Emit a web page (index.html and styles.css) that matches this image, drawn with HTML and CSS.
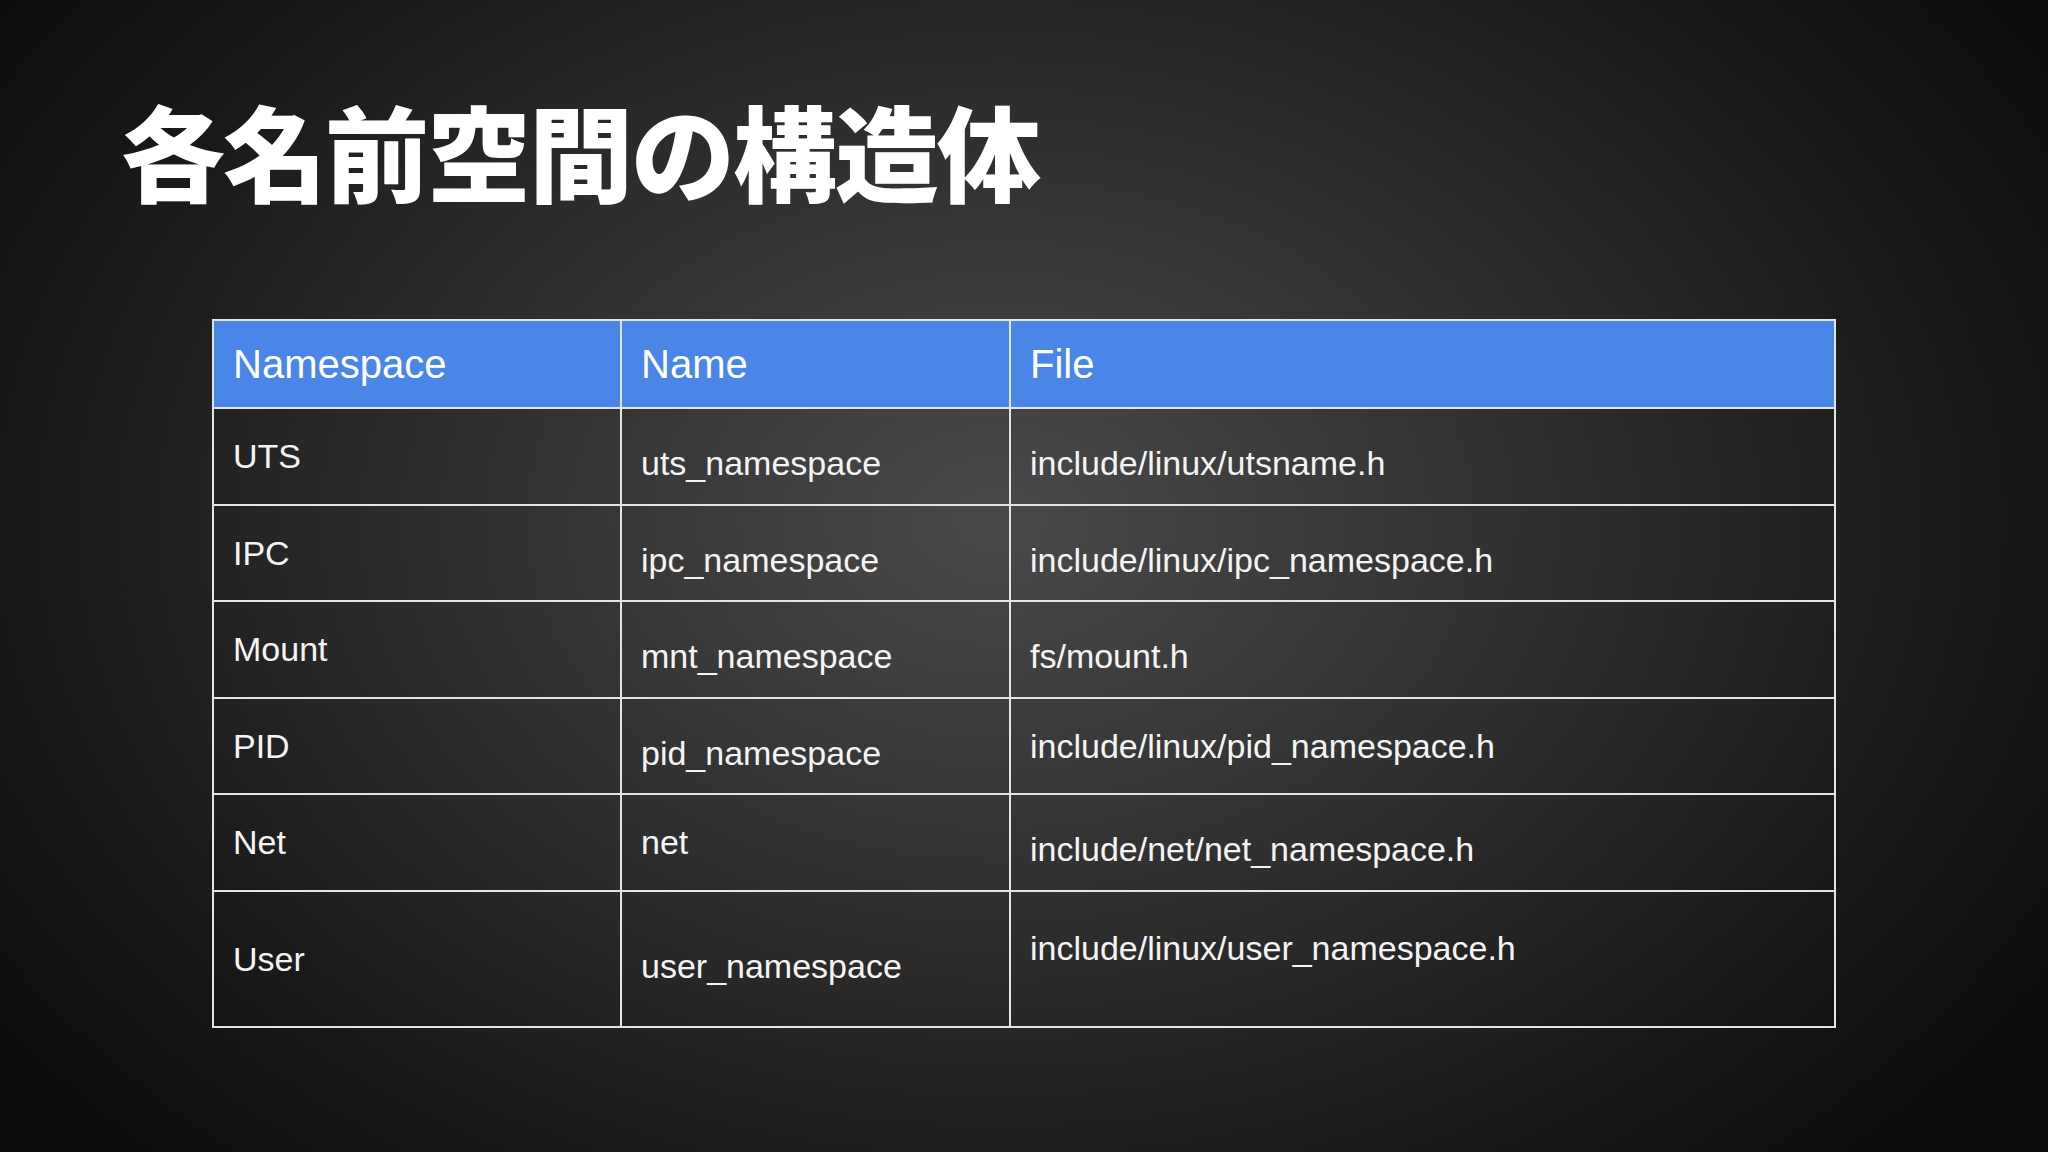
FILE: index.html
```html
<!DOCTYPE html>
<html lang="ja">
<head>
<meta charset="utf-8">
<title>各名前空間の構造体</title>
<link rel="stylesheet" href="styles.css">
</head>
<body>
<main class="slide">
  <h1 class="title">各名前空間の構造体</h1>
  <table class="ns-table">
    <colgroup>
      <col class="c1"><col class="c2"><col class="c3">
    </colgroup>
    <thead>
      <tr class="head-row">
        <th>Namespace</th><th>Name</th><th>File</th>
      </tr>
    </thead>
    <tbody>
      <tr class="row">
        <td>UTS</td><td class="lo">uts_namespace</td><td class="lo">include/linux/utsname.h</td>
      </tr>
      <tr class="row">
        <td>IPC</td><td class="lo">ipc_namespace</td><td class="lo">include/linux/ipc_namespace.h</td>
      </tr>
      <tr class="row">
        <td>Mount</td><td class="lo">mnt_namespace</td><td class="lo">fs/mount.h</td>
      </tr>
      <tr class="row">
        <td>PID</td><td class="lo">pid_namespace</td><td>include/linux/pid_namespace.h</td>
      </tr>
      <tr class="row">
        <td>Net</td><td>net</td><td class="lo">include/net/net_namespace.h</td>
      </tr>
      <tr class="row last">
        <td>User</td><td class="lo">user_namespace</td><td class="top">include/linux/user_namespace.h</td>
      </tr>
    </tbody>
  </table>
</main>
</body>
</html>
```
FILE: styles.css
```css
html, body {
  margin: 0;
  padding: 0;
  background: #111;
}

.slide {
  width: 2048px;
  height: 1152px;
  box-sizing: border-box;
  padding: 98px 0 0 0;
  overflow: hidden;
  background: radial-gradient(ellipse 1250px 900px at 1000px 520px, #4a4a4a 0%, #2e2e2e 45%, #171717 80%, #0d0d0d 100%);
  font-family: "Liberation Sans", Arial, sans-serif;
  color: #ffffff;
}

.title {
  margin: 0 0 0 121px;
  font-family: "Noto Sans CJK JP", "Noto Sans CJK SC", sans-serif;
  font-weight: 900;
  font-size: 104px;
  line-height: 104px;
  letter-spacing: -2px;
  color: #ffffff;
}

.ns-table {
  margin: 117px 0 0 212px;
  width: 1622px;
  border-collapse: collapse;
  table-layout: fixed;
}

.c1 { width: 408px; }
.c2 { width: 389px; }
.c3 { width: 825px; }

.ns-table th,
.ns-table td {
  border: 2px solid #e4e4e4;
  padding: 0 10px 0 19px;
  text-align: left;
  vertical-align: middle;
  white-space: nowrap;
}

.ns-table th {
  background: #4a86e8;
  font-weight: 400;
  font-size: 40px;
  line-height: 46px;
}

.head-row { height: 88px; }
.row { height: 96.5px; }
.row.last { height: 136px; }

.ns-table td {
  font-size: 34px;
  line-height: 40px;
  color: #f4f4f4;
}

.ns-table td.lo {
  padding-top: 14px;
}

.ns-table td.top {
  vertical-align: top;
  padding-top: 36px;
}
```
